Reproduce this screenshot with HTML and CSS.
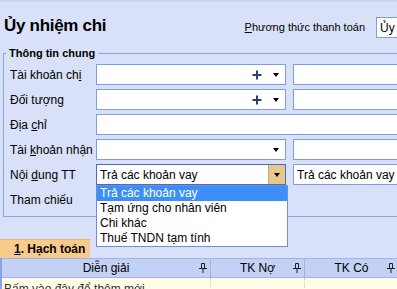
FILE: index.html
```html
<!DOCTYPE html>
<html lang="vi">
<head>
  <meta charset="UTF-8">
  <title>Ủy nhiệm chi</title>
  <link rel="stylesheet" href="styles.css">
</head>
<body>
  <div class="page">
    <header class="top">
      <h1 class="title">Ủy nhiệm chi</h1>
      <div class="payment">
        <span class="payment-label"><u>P</u>hương thức thanh toán</span>
        <div class="box payment-box">Ủy nhiệm chi</div>
      </div>
    </header>

    <fieldset class="general">
      <legend>Thông tin chung</legend>

      <div class="row">
        <span class="lbl">Tài khoản ch<u>i</u></span>
        <div class="box combo">
          <svg class="plus" width="10" height="10" viewBox="0 0 10 10"><path d="M5 0.5v9M0.5 5h9" stroke="#2c3d7a" stroke-width="2"/></svg>
          <span class="arrow"></span>
        </div>
        <div class="box side"></div>
      </div>

      <div class="row">
        <span class="lbl">Đối tượn<u>g</u></span>
        <div class="box combo">
          <svg class="plus" width="10" height="10" viewBox="0 0 10 10"><path d="M5 0.5v9M0.5 5h9" stroke="#2c3d7a" stroke-width="2"/></svg>
          <span class="arrow"></span>
        </div>
        <div class="box side"></div>
      </div>

      <div class="row">
        <span class="lbl">Địa <u>c</u>hỉ</span>
        <div class="box wide"></div>
      </div>

      <div class="row">
        <span class="lbl">Tài <u>k</u>hoản nhận</span>
        <div class="box combo">
          <span class="arrow"></span>
        </div>
        <div class="box side"></div>
      </div>

      <div class="row">
        <span class="lbl">Nội <u>d</u>ung TT</span>
        <div class="box combo active">
          <span class="value">Trả các khoản vay</span>
          <span class="drop-btn"><span class="arrow"></span></span>
          <ul class="list">
            <li class="selected">Trả các khoản vay</li>
            <li>Tạm ứng cho nhân viên</li>
            <li>Chi khác</li>
            <li>Thuế TNDN tạm tính</li>
          </ul>
        </div>
        <div class="box side"><span class="value">Trả các khoản vay</span></div>
      </div>

      <div class="row">
        <span class="lbl">Tham chiếu</span>
        <div class="box combo"></div>
      </div>
    </fieldset>

    <div class="tabs">
      <div class="tab"><u>1</u>. Hạch toán</div>
    </div>

    <div class="grid">
      <div class="grid-head">
        <div class="col c1"><span>Diễn giải</span><svg class="pin" width="8" height="10" viewBox="0 0 8 10"><path d="M2.5 0.5h3v5h-3zM0 5.5h8M4 6v4" fill="none" stroke="#1e1e1e"/></svg></div>
        <div class="col c2"><span>TK Nợ</span><svg class="pin" width="8" height="10" viewBox="0 0 8 10"><path d="M2.5 0.5h3v5h-3zM0 5.5h8M4 6v4" fill="none" stroke="#1e1e1e"/></svg></div>
        <div class="col c3"><span>TK Có</span><svg class="pin" width="8" height="10" viewBox="0 0 8 10"><path d="M2.5 0.5h3v5h-3zM0 5.5h8M4 6v4" fill="none" stroke="#1e1e1e"/></svg></div>
      </div>
      <div class="grid-row">
        <div class="cell c1">Bấm vào đây để thêm mới</div>
        <div class="cell c2"></div>
        <div class="cell c3"></div>
      </div>
    </div>
  </div>
</body>
</html>
```

FILE: styles.css
```css
* {
  box-sizing: border-box;
}
body {
  margin: 0;
  background: #d8e1f8;
  font-family: "Liberation Sans", Arial, sans-serif;
  font-size: 12px;
  color: #000;
  overflow: hidden;
}
u {
  text-decoration: underline;
  text-underline-offset: 1px;
}
.page {
  width: 397px;
  height: 289px;
  overflow: hidden;
  border-top: 2px solid #c9d4f3;
}
.top {
  height: 44px;
  display: flex;
  align-items: center;
  justify-content: space-between;
  padding: 4px 0 0 4px;
  white-space: nowrap;
}
.title {
  margin: 0;
  font-size: 17px;
  font-weight: bold;
  letter-spacing: -0.3px;
}
.payment {
  display: flex;
  align-items: center;
  gap: 11px;
  margin-top: 2px;
  margin-right: -60px;
}
.payment-label {
  font-size: 11px;
}
.payment-box {
  width: 81px;
  height: 22px;
  padding-left: 3px;
  line-height: 20px;
  color: #000;
  background: #fffdf5;
  overflow: hidden;
}
.box {
  border: 1px solid #7f9ce6;
  background: #fff;
  height: 21px;
}
.general {
  margin: 0 0 0 3px;
  width: 440px;
  border: 1px solid #8aa3e3;
  border-right: none;
  padding: 4px 0 2px 6px;
}
.general legend {
  font-size: 11px;
  font-weight: bold;
  padding: 0 3px;
  margin-left: -4px;
  line-height: 14px;
}
.row {
  display: flex;
  align-items: center;
  height: 21px;
  margin-bottom: 4px;
  white-space: nowrap;
}
.lbl {
  width: 86px;
  flex: none;
}
.combo {
  position: relative;
  width: 190px;
  flex: none;
  display: flex;
  align-items: center;
  justify-content: flex-end;
  padding-right: 6px;
}
.plus {
  margin-right: 11px;
}
.arrow {
  width: 0;
  height: 0;
  border-left: 3.5px solid transparent;
  border-right: 3.5px solid transparent;
  border-top: 4px solid #000;
}
.side {
  width: 120px;
  flex: none;
  margin-left: 7px;
  display: flex;
  align-items: center;
}
.wide {
  width: 320px;
  flex: none;
}
.value {
  padding-left: 3px;
}
.combo.active {
  border-color: #4f6bb3;
  padding-right: 0;
  justify-content: space-between;
}
.drop-btn {
  width: 17px;
  height: 19px;
  background: #e5c98c;
  border-left: 1px solid #c9ab6c;
  display: flex;
  align-items: center;
  justify-content: center;
}
.list {
  position: absolute;
  top: 20px;
  left: -1px;
  width: 192px;
  margin: 0;
  padding: 0;
  list-style: none;
  background: #fff;
  border: 1px solid #6f8fdc;
  z-index: 2;
}
.list li {
  height: 15px;
  line-height: 15px;
  padding-left: 3px;
}
.list li.selected {
  background: #3d8ff7;
  color: #fff;
}
.tabs {
  margin-top: 22px;
  display: flex;
}
.tab {
  width: 90px;
  height: 19px;
  background: #f8cb8c;
  border-top: 1px solid #f0b46a;
  font-weight: bold;
  font-size: 12px;
  line-height: 18px;
  padding-left: 14px;
}
.grid {
  border-left: 2px solid #8aa3e3;
}
.grid-head {
  display: flex;
  height: 20px;
  background: #c3d1f5;
  border-top: 1px solid #9fb4ec;
  border-bottom: 1px solid #9fb4ec;
}
.col {
  display: flex;
  align-items: center;
  position: relative;
  justify-content: center;
  border-right: 1px solid #9fb4ec;
  white-space: nowrap;
}
.c1 {
  width: 209px;
  flex: none;
}
.c2 {
  width: 94px;
  flex: none;
}
.c3 {
  width: 94px;
  flex: none;
}
.pin {
  position: absolute;
  right: 3px;
  top: 4px;
}
.grid-row {
  display: flex;
  height: 20px;
  background: #fffde8;
}
.cell {
  border-right: 1px dotted #c8c8c8;
  padding: 4px 0 0 2px;
  color: #333;
  white-space: nowrap;
}
```
